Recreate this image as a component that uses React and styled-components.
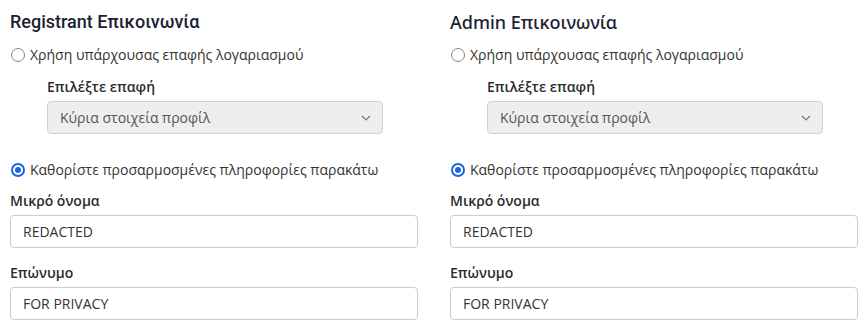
import styled, { createGlobalStyle } from 'styled-components';

const GlobalStyle = createGlobalStyle`
  body {
    margin: 0;
    background: #fff;
    font-family: 'Open Sans', 'Noto Sans', sans-serif;
    font-size: 14px;
    color: #333;
  }
`;

const Page = styled.div`
  display: grid;
  grid-template-columns: 1fr 1fr;
  column-gap: 32px;
  padding: 10px 10px 0;
`;

const Column = styled.section`
  display: flex;
  flex-direction: column;
`;

const Heading = styled.h3`
  margin: 0;
  font-family: ${(p) => p.$font || "Roboto, 'Noto Sans', sans-serif"};
  font-size: 18px;
  font-weight: 500;
  line-height: 24px;
  color: #1b2233;
`;

const RadioRow = styled.label`
  display: flex;
  align-items: center;
  gap: 5px;
  height: 20px;
  margin-top: ${(p) => p.$top}px;
  margin-left: 1px;
  line-height: 20px;
  color: #333;
`;

const RadioDot = styled.span`
  box-sizing: border-box;
  width: 14px;
  height: 14px;
  border-radius: 50%;
  border: ${(p) => (p.$checked ? '2px solid #1a66e0' : '1px solid #858585')};
  display: flex;
  align-items: center;
  justify-content: center;
  background: #fff;

  &::after {
    content: '';
    display: ${(p) => (p.$checked ? 'block' : 'none')};
    width: 6px;
    height: 6px;
    border-radius: 50%;
    background: #1a66e0;
  }
`;

const Indented = styled.div`
  margin: 12px 0 0 37px;
  width: 336px;
`;

const Field = styled.div`
  display: flex;
  flex-direction: column;
  margin-top: ${(p) => p.$top}px;
`;

const Label = styled.div`
  font-weight: 600;
  line-height: 20px;
  margin-bottom: 4px;
  color: #2b2b2b;
`;

const SelectBox = styled.div`
  box-sizing: border-box;
  height: 33px;
  display: flex;
  align-items: center;
  justify-content: space-between;
  padding: 0 11px 0 12px;
  background: #eeeeee;
  border: 1px solid #d2d2d2;
  border-radius: 4px;
  color: #555;
`;

const TextBox = styled.div`
  box-sizing: border-box;
  height: 33px;
  display: flex;
  align-items: center;
  padding: 0 12px;
  border: 1px solid #cccccc;
  border-radius: 4px;
  background: #fff;
  color: #333;
`;

const Chevron = () => (
  <svg width="10" height="6" viewBox="0 0 10 6" fill="none">
    <path d="M1 1l4 4 4-4" stroke="#777" strokeWidth="1.2" />
  </svg>
);

const ContactColumn = ({ title, font }) => (
  <Column>
    <Heading $font={font}>{title}</Heading>
    <RadioRow $top={11}>
      <RadioDot />
      Χρήση υπάρχουσας επαφής λογαριασμού
    </RadioRow>
    <Indented>
      <Label>Επιλέξτε επαφή</Label>
      <SelectBox>
        Κύρια στοιχεία προφίλ
        <Chevron />
      </SelectBox>
    </Indented>
    <RadioRow $top={26}>
      <RadioDot $checked />
      Καθορίστε προσαρμοσμένες πληροφορίες παρακάτω
    </RadioRow>
    <Field $top={11}>
      <Label>Μικρό όνομα</Label>
      <TextBox>REDACTED</TextBox>
    </Field>
    <Field $top={15}>
      <Label>Επώνυμο</Label>
      <TextBox>FOR PRIVACY</TextBox>
    </Field>
  </Column>
);

const App = () => (
  <>
    <GlobalStyle />
    <Page>
      <ContactColumn title="Registrant Επικοινωνία" />
      <ContactColumn title="Admin Επικοινωνία" font="'Noto Sans', sans-serif" />
    </Page>
  </>
);

export default App;
